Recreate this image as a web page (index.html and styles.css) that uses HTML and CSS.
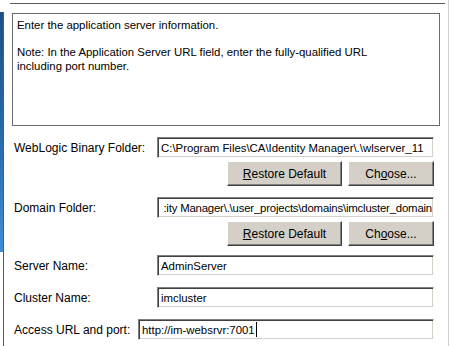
FILE: index.html
```html
<!DOCTYPE html>
<html lang="en">
<head>
    <meta charset="UTF-8">
    <title>Application Server Information</title>
    <link rel="stylesheet" href="styles.css">
</head>
<body>
    <div class="window">
        <div class="rail"></div>
        <div class="edge"></div>
        <div class="panel">
            <div class="topline"></div>

            <div class="info">
                <p>Enter the application server information.</p>
                <p>Note: In the Application Server URL field, enter the fully-qualified URL<br>including port number.</p>
            </div>

            <div class="form">
                <div class="row">
                    <label class="label">WebLogic Binary Folder:</label>
                    <div class="field"><span>C:\Program Files\CA\Identity Manager\.\wlserver_11</span></div>
                </div>
                <div class="buttons">
                    <button class="btn restore"><u>R</u>estore Default</button>
                    <button class="btn choose">Ch<u>o</u>ose...</button>
                </div>

                <div class="row row-domain">
                    <label class="label">Domain Folder:</label>
                    <div class="field scrolled"><span>:ity Manager\.\user_projects\domains\imcluster_domain</span></div>
                </div>
                <div class="buttons">
                    <button class="btn restore"><u>R</u>estore Default</button>
                    <button class="btn choose">Ch<u>o</u>ose...</button>
                </div>

                <div class="row row-server">
                    <label class="label">Server Name:</label>
                    <div class="field"><span>AdminServer</span></div>
                </div>
                <div class="row row-next">
                    <label class="label">Cluster Name:</label>
                    <div class="field"><span>imcluster</span></div>
                </div>
                <div class="row row-next row-wide">
                    <label class="label">Access URL and port:</label>
                    <div class="field"><span>http://im-websrvr:7001</span><i class="caret"></i></div>
                </div>
            </div>
        </div>
        <div class="rightline"></div>
    </div>
</body>
</html>
```

FILE: styles.css
```css
* {
    margin: 0;
    padding: 0;
    box-sizing: border-box;
}

body {
    font-family: "Liberation Sans", Arial, sans-serif;
    font-size: 12px;
    color: #000;
    background: #fff;
    width: 451px;
    height: 346px;
    overflow: hidden;
}

.window {
    display: flex;
    height: 346px;
}

.rail {
    width: 3px;
    height: 240px;
    margin-top: 12px;
    background: linear-gradient(180deg, #1d4f86 0%, #2a6fb4 60%, #3f8fd6 100%);
}

.edge {
    width: 1px;
    margin-top: 12px;
    background: #5a5a5a;
}

.panel {
    flex: 1;
    padding-top: 3px;
}

.topline {
    height: 1px;
    margin-left: 6px;
    margin-right: 3px;
    background: #5a5a5a;
}

.rightline {
    width: 1px;
    margin-right: 2px;
    background: #d4d0c8;
}

.info {
    margin: 9px 0 0 8px;
    width: 428px;
    height: 113px;
    border: 1px solid #6b6b6b;
    padding: 4px 4px;
    font-size: 11.4px;
    line-height: 14px;
}

.info p + p {
    margin-top: 13px;
}

.form {
    padding: 11px 0 0 10px;
    width: 430px;
}

.row {
    display: grid;
    grid-template-columns: 143px 1fr;
    align-items: center;
    height: 21px;
}

.row-wide {
    grid-template-columns: 124px 1fr;
}

.row-domain {
    margin-top: 11px;
}

.row-server {
    margin-top: 9px;
}

.row-next {
    margin-top: 11px;
}

.label {
    white-space: nowrap;
}

.field {
    height: 21px;
    display: flex;
    align-items: center;
    padding: 0 2px 0 3px;
    font-size: 11.4px;
    border: 1px solid;
    border-color: #808080 #fff #fff #808080;
    box-shadow: inset 1px 1px #404040, inset -1px -1px #d4d0c8;
    overflow: hidden;
    white-space: nowrap;
}

.field.scrolled {
    justify-content: flex-end;
    padding: 0 1px 0 2px;
    letter-spacing: -0.2px;
}

.field span {
    flex: none;
}

.caret {
    width: 1px;
    height: 15px;
    margin-left: 1px;
    background: #000;
}

.buttons {
    display: flex;
    justify-content: flex-end;
    gap: 6px;
    margin-top: 3px;
}

.btn {
    height: 25px;
    font: inherit;
    color: #000;
    background: #d4d0c8;
    border: 1px solid;
    border-color: #fff #404040 #404040 #fff;
    box-shadow: inset -1px -1px #808080;
}

.btn u {
    text-decoration: underline;
}

.restore {
    width: 115px;
}

.choose {
    width: 86px;
}
```
